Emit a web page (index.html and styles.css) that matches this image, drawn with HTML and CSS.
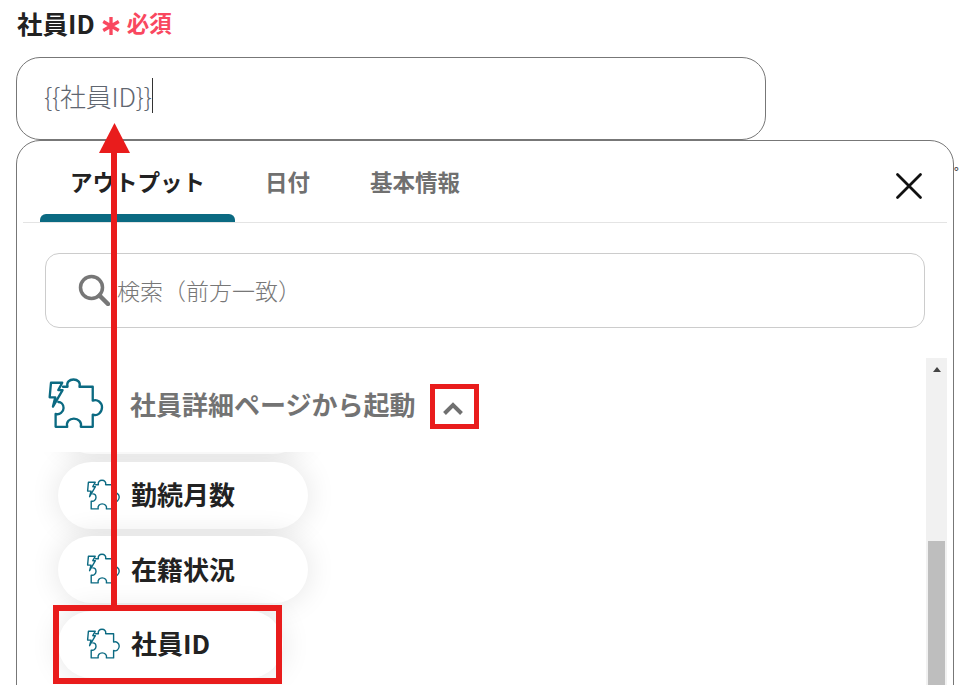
FILE: index.html
```html
<!DOCTYPE html>
<html lang="ja">
<head>
  <meta charset="UTF-8" />
  <title>社員ID</title>
  <link rel="stylesheet" href="styles.css">
</head>
<body>
  <svg class="defs" width="0" height="0">
    <symbol id="puzzle" viewBox="50 25 175 160">
      <path d="M98 56H112C108 42 118 34 130 34C142 34 152 42 148 56H188V98C202 92 216 104 216 118C216 134 202 146 188 140V177H152C156 162 144 152 131 152C118 152 107 162 111 177H76V138C88 142 100 132 100 120C100 108 92 102 84 102" fill="none" stroke="#0b6a82" stroke-width="7" stroke-linejoin="round" stroke-linecap="round"/>
      <path d="M62 44H96L84 66H97L68 116L75 88H58Z" fill="none" stroke="#0b6a82" stroke-width="7" stroke-linejoin="round"/>
    </symbol>
  </svg>

  <div class="label">
    <span class="label-name">社員ID</span>
    <svg class="asterisk" width="20" height="20" viewBox="0 0 18 18"><path d="M9 1V17M2 5L16 13M16 5L2 13" stroke="#f9485f" stroke-width="3"/></svg>
    <span class="label-req">必須</span>
  </div>

  <div class="input"><span class="input-text">{{社員ID}}</span><span class="caret"></span></div>

  <div class="panel-wrap">
    <div class="panel">
      <div class="tabs">
        <div class="tab active">アウトプット</div>
        <div class="tab">日付</div>
        <div class="tab">基本情報</div>
        <svg class="close" width="28" height="28" viewBox="0 0 28 28"><path d="M2.500 2.500L25.500 25.500M25.500 2.500L2.500 25.500" stroke="#111" stroke-width="2.800" stroke-linecap="round"/></svg>
      </div>

      <div class="search">
        <svg width="32" height="32" viewBox="0 0 32 32"><circle cx="13.500" cy="13.500" r="11" fill="none" stroke="#777" stroke-width="3.500"/><path d="M21.500 21.500L30 30" stroke="#777" stroke-width="4.500" stroke-linecap="round"/></svg>
        <span class="search-text">検索（前方一致）</span>
      </div>

      <div class="content">
        <div class="tree">
          <div class="group">
            <svg class="group-icon" width="58" height="54"><use href="#puzzle"/></svg>
            <span class="group-name">社員詳細ページから起動</span>
            <svg class="chevron" width="22" height="15" viewBox="0 0 22 15"><path d="M2.500 12.500L11 4L19.500 12.500" fill="none" stroke="#707070" stroke-width="4"/></svg>
          </div>
          <div class="list">
            <div class="pill hidden-pill"></div>
            <div class="pill"><svg width="35" height="33"><use href="#puzzle"/></svg>勤続月数</div>
            <div class="pill"><svg width="35" height="33"><use href="#puzzle"/></svg>在籍状況</div>
            <div class="pill"><svg width="35" height="33"><use href="#puzzle"/></svg>社員ID</div>
          </div>
        </div>
        <div class="scrollbar">
          <div class="scroll-up"></div>
          <div class="thumb"></div>
        </div>
      </div>
    </div>
    <span class="dot">。</span>
  </div>

  <!-- 赤い注釈 -->
  <div class="mark mark-chevron"></div>
  <div class="mark mark-row"></div>
  <svg class="arrow" width="32" height="484" viewBox="0 0 32 484"><path d="M15.500 0L31 30H0Z" fill="#e91c1c"/><rect x="12" y="28" width="6" height="456" fill="#e91c1c"/></svg>
</body>
</html>
```

FILE: styles.css
```css
html, body {
  height: 685px;
  overflow: hidden;
}
body {
  margin: 0;
  background: #fff;
  color: #222;
  font-family: "Noto Sans CJK JP", "Noto Sans", sans-serif;
  position: relative;
}
.defs {
  position: absolute;
}
.label {
  display: flex;
  align-items: center;
  height: 50px;
  padding: 0 0 6px 17px;
  box-sizing: border-box;
}
.label-name {
  font-size: 25.500px;
  font-weight: 700;
}
.asterisk {
  margin: 8px 6px 0 6px;
}
.label-req {
  color: #f9485f;
  font-size: 22.500px;
  font-weight: 700;
}
.input {
  display: flex;
  align-items: center;
  box-sizing: border-box;
  width: 750px;
  height: 83px;
  margin: 7px 0 0 16px;
  padding: 0 0 6px 27px;
  border: 1px solid #777;
  border-radius: 24px;
}
.input-text {
  color: #5f6670;
  font-size: 26px;
  font-weight: 300;
  letter-spacing: -0.2px;
}
.caret {
  width: 1.500px;
  height: 35px;
  background: #333;
}
.panel-wrap {
  display: flex;
  align-items: flex-start;
}
.panel {
  flex: none;
  box-sizing: border-box;
  width: 938px;
  height: 600px;
  margin-left: 16px;
  padding: 0 6px;
  border: 1px solid #777;
  border-radius: 24px;
}
.dot {
  width: 12px;
  margin-top: 16px;
  color: #555;
  font-size: 12px;
  font-weight: 700;
}
.tabs {
  display: flex;
  align-items: center;
  box-sizing: border-box;
  height: 82px;
  padding: 0 24px 0 17px;
  border-bottom: 1px solid #e4e4e4;
}
.tab {
  position: relative;
  top: 0;
  padding: 0 30px;
  color: #707070;
  font-size: 22.500px;
  font-weight: 700;
  line-height: 1;
}
.tab.active {
  width: 135px;
  color: #222;
}
.tab.active::after {
  content: "";
  position: absolute;
  left: 0;
  right: 0;
  top: 44px;
  height: 8px;
  background: #0b6a82;
  border-radius: 6px 6px 0 0;
}
.close {
  margin-left: auto;
  margin-top: 8px;
}
.search {
  display: flex;
  align-items: center;
  gap: 7px;
  box-sizing: border-box;
  height: 75px;
  margin: 30px 22px 0;
  padding: 0 0 2px 32px;
  border: 1px solid #ccc;
  border-radius: 14px;
}
.search-text {
  color: #777;
  font-size: 23px;
  font-weight: 300;
}
.content {
  display: flex;
  margin-top: 30px;
}
.tree {
  flex: 1;
  min-width: 0;
}
.group {
  display: flex;
  align-items: center;
  box-sizing: border-box;
  height: 94px;
  padding: 0 0 4px 24px;
}
.group-name {
  margin-left: 25px;
  color: #737373;
  font-size: 26px;
  font-weight: 700;
}
.chevron {
  margin: 10px 0 0 27px;
}
.list {
  display: flex;
  flex-direction: column;
  align-items: flex-start;
  gap: 7.500px;
  height: 300px;
  padding-left: 35px;
  overflow: hidden;
}
.pill {
  display: flex;
  align-items: center;
  flex: none;
  gap: 10px;
  box-sizing: border-box;
  height: 67px;
  padding: 0 73px 2px 28px;
  background: #fff;
  border-radius: 34px;
  box-shadow: 0 0 30px rgba(0, 0, 0, 0.11);
  color: #222;
  font-size: 26px;
  font-weight: 700;
  line-height: 60px;
}
.hidden-pill {
  width: 249px;
  margin-top: -65px;
}
.scrollbar {
  position: relative;
  flex: none;
  width: 21px;
  height: 330px;
  background: #f1f1f1;
}
.scroll-up {
  width: 0;
  margin: 9px auto 0;
  border: 4.500px solid transparent;
  border-top: 0;
  border-bottom: 5px solid #444;
}
.thumb {
  width: 17px;
  height: 200px;
  margin: 169px 0 0 2px;
  background: #bebebe;
}
.mark {
  position: absolute;
  box-sizing: border-box;
  border: 5px solid #e91c1c;
}
.mark-chevron {
  left: 430px;
  top: 384px;
  width: 49px;
  height: 45px;
}
.mark-row {
  left: 53px;
  top: 605px;
  width: 229px;
  height: 79px;
  border-width: 6px;
}
.arrow {
  position: absolute;
  left: 99px;
  top: 123px;
}
```
